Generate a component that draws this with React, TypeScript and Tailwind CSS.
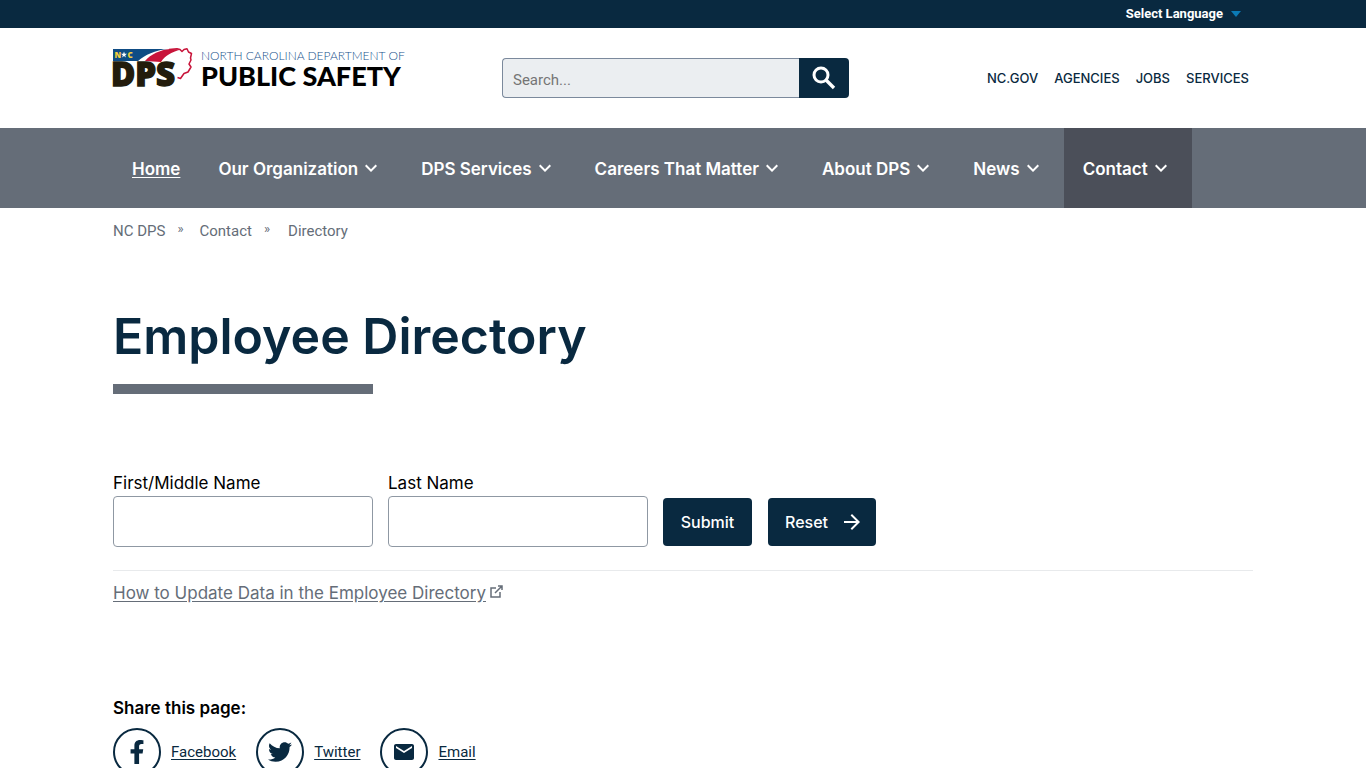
import type { ReactNode } from "react";
import { MdArrowForward, MdEmail, MdKeyboardArrowDown } from "react-icons/md";
import { FaFacebookF, FaTwitter } from "react-icons/fa";

const agencyLinks = ["NC.GOV", "AGENCIES", "JOBS", "SERVICES"];

const menu = [
  { label: "Our Organization" },
  { label: "DPS Services" },
  { label: "Careers That Matter" },
  { label: "About DPS" },
  { label: "News" },
  { label: "Contact", active: true },
];

const shareLinks = [
  { label: "Facebook", icon: <FaFacebookF size={24} /> },
  { label: "Twitter", icon: <FaTwitter size={24} /> },
  { label: "Email", icon: <MdEmail size={24} /> },
];

function Container({ className = "", children }: { className?: string; children: ReactNode }) {
  return <div className={`mx-auto w-full max-w-[1140px] ${className}`}>{children}</div>;
}

function Logo() {
  return (
    <a href="#" className="flex w-[290px] shrink-0 gap-2" aria-label="North Carolina Department of Public Safety">
      <svg viewBox="0 0 80 40" className="h-10 w-20 shrink-0 overflow-visible" aria-hidden="true">
        <path d="M0 1H55C42 2 32 7 25 13H0Z" fill="#0f4c84" />
        <path d="M32 13C38 6 47 2 57 1L68 1.5C58 4 52 8 48 14Z" fill="#c8143a" />
        <path
          d="M56 1.5L64 0.8L67 1.5L69 3.5L71 1.5L74 0.8L75.5 4L78.5 5.5L77.5 10L78 12L76 16L78 19L75 24L71 25.5L67.5 30.5L64.5 29.5"
          fill="none"
          stroke="#c8143a"
          strokeWidth="1.5"
          strokeLinejoin="round"
        />
        <text x="1.5" y="9.5" fill="#f5cf3c" fontFamily="Open Sans, sans-serif" fontWeight="800" fontSize="8">N</text>
        <path d="M11 3.6L11.8 5.8L14 5.8L12.2 7.2L12.9 9.5L11 8.1L9.1 9.5L9.8 7.2L8 5.8L10.2 5.8Z" fill="#fff" />
        <text x="14.5" y="9.5" fill="#f5cf3c" fontFamily="Open Sans, sans-serif" fontWeight="800" fontSize="8">C</text>
        <text x="-2" y="38" fill="#231c0c" stroke="#231c0c" strokeWidth="1.4" fontFamily="Open Sans, sans-serif" fontWeight="800" fontSize="33">DPS</text>
      </svg>
      <span className="whitespace-nowrap font-['Lato',sans-serif]">
        <span className="block text-xs font-light leading-4 text-[#18528c]">NORTH CAROLINA DEPARTMENT OF</span>
        <span className="block text-[27px] font-black leading-6 text-black">PUBLIC SAFETY</span>
      </span>
    </a>
  );
}

export default function App() {
  return (
    <div className="min-h-screen bg-white font-['Roboto',sans-serif] text-black">
      <div className="bg-[#092940]">
        <Container className="flex h-7 items-center justify-end pr-3">
          <button type="button" className="flex items-center gap-2 text-[13px] font-bold text-white">
            Select Language
            <svg viewBox="0 0 10 6" className="h-[6px] w-[10px]" aria-hidden="true">
              <path d="M0 0H10L5 6Z" fill="#0b7ab5" />
            </svg>
          </button>
        </Container>
      </div>

      <header>
        <Container className="flex h-25 items-center justify-between pr-1">
          <div className="flex items-center gap-[99px]">
            <div className="-mt-5">
              <Logo />
            </div>
            <form role="search" className="flex h-10 w-[347px]">
              <input
                type="text"
                aria-label="Search"
                placeholder="Search..."
                className="min-w-0 flex-1 rounded-l border border-r-0 border-[#7b899c] bg-[#ebeef1] px-[10px] pt-1 text-[15px] placeholder:text-[#757575]"
              />
              <button type="submit" aria-label="Search" className="flex w-[50px] items-center justify-center rounded-r bg-[#092940] text-white">
                <svg viewBox="0 0 24 24" className="size-6" fill="none" stroke="currentColor" strokeWidth="3" aria-hidden="true">
                  <circle cx="9" cy="9" r="7" />
                  <path d="M14 14L22 22" strokeWidth="3.4" />
                </svg>
              </button>
            </form>
          </div>
          <nav className="flex gap-4 pt-[2px] font-['Inter',sans-serif] text-[13px] font-medium text-[#092940]" aria-label="State links">
            {agencyLinks.map((label) => (
              <a key={label} href="#">{label}</a>
            ))}
          </nav>
        </Container>
      </header>

      <nav className="bg-[#656d78] font-['Inter',sans-serif] text-[17px] font-semibold text-white" aria-label="Main">
        <Container className="flex h-20">
          <a href="#" className="flex items-center px-[19px] pt-[3px] underline underline-offset-2">Home</a>
          {menu.map(({ label, active }) => (
            <a key={label} href="#" className={`flex items-center gap-px whitespace-nowrap px-[19px] pt-[3px] ${active ? "bg-[#4b4f59]" : ""}`}>
              {label}
              <MdKeyboardArrowDown size={24} className="mb-[3px]" />
            </a>
          ))}
        </Container>
      </nav>

      <main>
        <Container>
          <nav className="flex h-11 items-center pt-[2px] text-[15px] text-[#656d78]" aria-label="Breadcrumb">
            <a href="#">NC DPS</a>
            <span className="mb-1 ml-3 mr-4 text-[13px]">»</span>
            <a href="#">Contact</a>
            <span className="mb-1 ml-3 mr-[18px] text-[13px]">»</span>
            <span>Directory</span>
          </nav>

          <h1 className="mt-12 font-['Inter',sans-serif] text-[50px] font-semibold leading-[72px] text-[#092940]">Employee Directory</h1>
          <div className="mt-3 h-[10px] w-[260px] bg-[#656d78]" />

          <form className="mt-[77px] flex items-end gap-[15px] border-b border-[#e8eaec] pb-[23px] font-['Inter',sans-serif]">
            <label className="block text-[17px] leading-[25px]">
              First/Middle Name
              <input type="text" className="block h-[51px] w-[260px] rounded border border-[#8f98a3] bg-white px-3" />
            </label>
            <label className="block text-[17px] leading-[25px]">
              Last Name
              <input type="text" className="block h-[51px] w-[260px] rounded border border-[#8f98a3] bg-white px-3" />
            </label>
            <div className="flex gap-4 pb-px">
              <button type="submit" className="flex h-12 w-[89px] items-center justify-center rounded bg-[#092940] font-medium text-white">Submit</button>
              <button type="reset" className="flex h-12 w-[108px] items-center justify-end gap-3 rounded bg-[#092940] pr-3 font-medium text-white">
                Reset
                <MdArrowForward size={24} />
              </button>
            </div>
          </form>

          <a href="#" className="mt-[10px] inline-flex items-center gap-1 font-['Inter',sans-serif] text-[17px] leading-6 text-[#656d78]">
            <span className="underline underline-offset-2">How to Update Data in the Employee Directory</span>
            <svg viewBox="0 0 13 13" className="mb-1 size-[13px]" fill="none" stroke="currentColor" strokeWidth="1.5" aria-hidden="true">
              <path d="M6 3H1V12H10V7M8 1H12V5M12 1L5 8" />
            </svg>
          </a>

          <h2 className="mt-[90px] font-['Inter',sans-serif] text-[17px] font-semibold leading-6">Share this page:</h2>
          <ul className="mt-2 flex gap-5 text-[15px]">
            {shareLinks.map(({ label, icon }) => (
              <li key={label}>
                <a href="#" className="flex items-center gap-[10px] text-[#092940]">
                  <span className="flex size-12 items-center justify-center rounded-full border-2 border-[#092940]">{icon}</span>
                  <span className="underline underline-offset-2">{label}</span>
                </a>
              </li>
            ))}
          </ul>
        </Container>
      </main>
    </div>
  );
}
